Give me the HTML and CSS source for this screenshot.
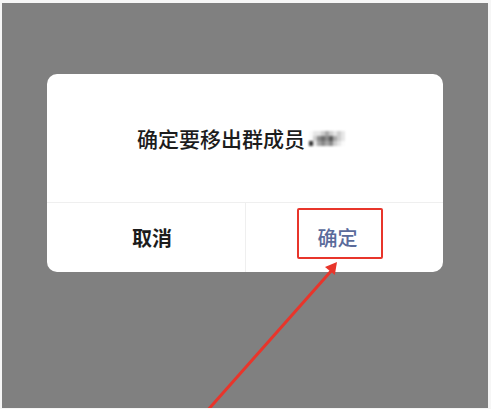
FILE: index.html
```html
<!DOCTYPE html>
<html lang="zh-CN">
<head>
<meta charset="utf-8">
<title>移出群成员</title>
<link rel="stylesheet" href="styles.css">
</head>
<body>
<div class="stage">
  <div class="dialog">
    <div class="msg">
      <span class="msg-text">确定要移出群成员</span>
      <span class="mosaic" aria-label="已打码">
        <i class="s0"></i><i class="s1"></i><i class="s1"></i><i class="s2"></i><i class="s3"></i><i class="s2"></i><i class="s1"></i><i class="s2"></i><i class="s1"></i>
        <i class="s0"></i><i class="s2"></i><i class="s4"></i><i class="s5"></i><i class="s4"></i><i class="s6"></i><i class="s3"></i><i class="s2"></i><i class="s1"></i>
        <i class="s7"></i><i class="s1"></i><i class="s3"></i><i class="s4"></i><i class="s3"></i><i class="s4"></i><i class="s2"></i><i class="s1"></i><i class="s0"></i>
      </span>
    </div>
    <div class="actions">
      <div class="btn btn-cancel">取消</div>
      <div class="btn btn-ok">确定</div>
    </div>
  </div>
  <div class="highlight"></div>
  <svg class="arrow" width="486" height="405" viewBox="0 0 486 405">
    <line x1="205" y1="408" x2="330" y2="267" stroke="#e8352b" stroke-width="3" stroke-linecap="round"/>
    <polygon points="335,259 332.8,272 323,264" fill="#e8352b"/>
  </svg>
</div>
</body>
</html>
```

FILE: styles.css
```css
html, body {
  margin: 0;
  padding: 0;
}
body {
  background: #f6f6f6;
  width: 491px;
  height: 409px;
  overflow: hidden;
  font-family: "Noto Sans CJK SC", "Noto Sans", sans-serif;
}
.stage {
  position: relative;
  margin: 3px 3px 0 2px;
  height: 405px;
  background: #808080;
  padding-top: 71px;
  box-sizing: border-box;
  overflow: hidden;
}
.dialog {
  margin-left: 45px;
  width: 396px;
  height: 198px;
  background: #ffffff;
  border-radius: 10px;
  display: flex;
  flex-direction: column;
  overflow: hidden;
}
.msg {
  height: 128px;
  display: flex;
  align-items: center;
  justify-content: center;
  gap: 4px;
  padding-right: 8px;
  box-sizing: border-box;
}
.msg-text {
  font-size: 21px;
  font-weight: 500;
  color: #1c1c1c;
  line-height: 1;
}
.mosaic {
  display: grid;
  grid-template-columns: repeat(9, 4px);
  grid-template-rows: repeat(3, 5px);
  filter: blur(0.8px);
  margin-top: 1px;
}
.mosaic i { display: block; }
.s0 { background: #fbfbfb; }
.s1 { background: #e6e6e6; }
.s2 { background: #cdcdcd; }
.s3 { background: #a8a8a8; }
.s4 { background: #8a8a8a; }
.s5 { background: #6e6e6e; }
.s6 { background: #5a5a5a; }
.s7 { background: #333333; }
.actions {
  flex: 1;
  display: grid;
  grid-template-columns: 1fr 1fr;
  border-top: 1px solid #efefef;
}
.btn {
  display: flex;
  align-items: center;
  justify-content: center;
  font-size: 20px;
  line-height: 1;
}
.btn-cancel {
  color: #1c1c1c;
  font-weight: 700;
  padding-left: 12px;
}
.btn-ok {
  color: #5a6b9b;
  font-weight: 500;
  border-left: 1px solid #efefef;
  padding-right: 14px;
}
.highlight {
  position: absolute;
  left: 295px;
  top: 205px;
  width: 86px;
  height: 51px;
  box-sizing: border-box;
  border: 2px solid #e8352b;
  border-radius: 2px;
}
.arrow {
  position: absolute;
  left: 0;
  top: 0;
}
```
